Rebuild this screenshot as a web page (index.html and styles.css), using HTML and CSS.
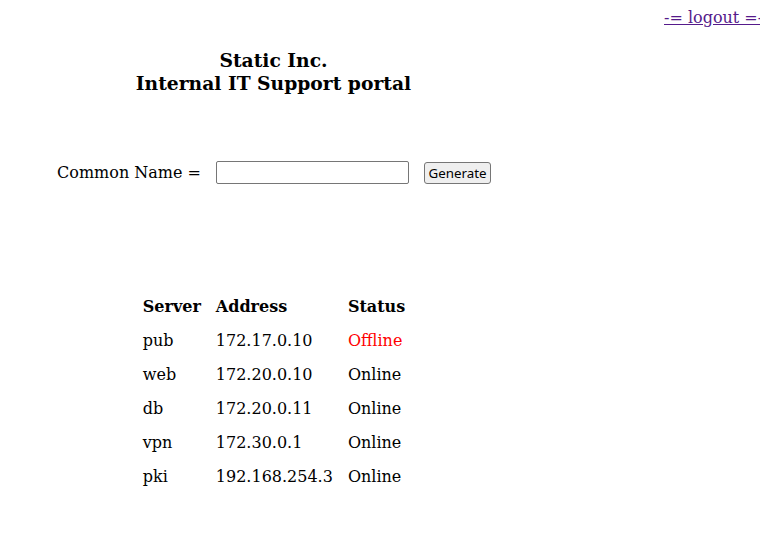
FILE: index.html
```html
<!DOCTYPE html>
<html>
<head>
<meta charset="utf-8">
<title>Static Inc. - IT Support</title>
<link rel="stylesheet" href="styles.css">
</head>
<body>
<div class="topbar"><a class="logout" href="#">-= logout =-</a></div>
<div class="wrap">
  <h3 class="title">Static Inc.<br>Internal IT Support portal</h3>
  <form class="cn-form">
    <table class="form-table">
      <tr>
        <td class="label">Common Name =</td>
        <td><input class="cn-input" type="text"></td>
        <td><button class="gen-btn" type="button">Generate</button></td>
      </tr>
    </table>
  </form>
  <table class="servers">
    <tr><th>Server</th><th>Address</th><th>Status</th></tr>
    <tr><td>pub</td><td>172.17.0.10</td><td class="offline">Offline</td></tr>
    <tr><td>web</td><td>172.20.0.10</td><td>Online</td></tr>
    <tr><td>db</td><td>172.20.0.11</td><td>Online</td></tr>
    <tr><td>vpn</td><td>172.30.0.1</td><td>Online</td></tr>
    <tr><td>pki</td><td>192.168.254.3</td><td>Online</td></tr>
  </table>
</div>
</body>
</html>
```
FILE: styles.css
```css
html, body {
  background: #ffffff;
}
body {
  margin: 8px;
  font-family: "DejaVu Serif", serif;
  font-size: 16px;
  color: #000;
}
.topbar {
  line-height: 19px;
  padding-left: 656px;
  white-space: nowrap;
}
.logout {
  color: #551a8b;
  text-decoration: underline;
}
.wrap {
  width: 532px;
  text-align: center;
}
.title {
  font-size: 18.72px;
  font-weight: bold;
  line-height: 23px;
  margin: 22px 1px 0 0;
}
.cn-form {
  margin: 58px 0 0 0;
}
table {
  border-collapse: separate;
  border-spacing: 1px;
  margin: 0 auto;
  text-align: left;
}
td, th {
  padding: 7px;
  line-height: 19px;
}
th {
  font-weight: bold;
}
.form-table td {
  vertical-align: middle;
}
.cn-input {
  width: 193px;
  height: 23px;
  box-sizing: border-box;
  border: 1px solid #767676;
  border-radius: 2px;
  padding: 1px 2px;
  font-family: "Noto Sans", sans-serif;
  font-size: 13.33px;
  display: block;
}
.gen-btn {
  font-family: "Noto Sans", sans-serif;
  font-size: 13.33px;
  width: 67px;
  height: 22px;
  padding: 1px 0;
  text-align: center;
  border: 1px solid #767676;
  border-radius: 3px;
  background: #efefef;
  color: #000;
  display: block;
}
.servers {
  margin-top: 97px;
}
.offline {
  color: #ff0000;
}
```
